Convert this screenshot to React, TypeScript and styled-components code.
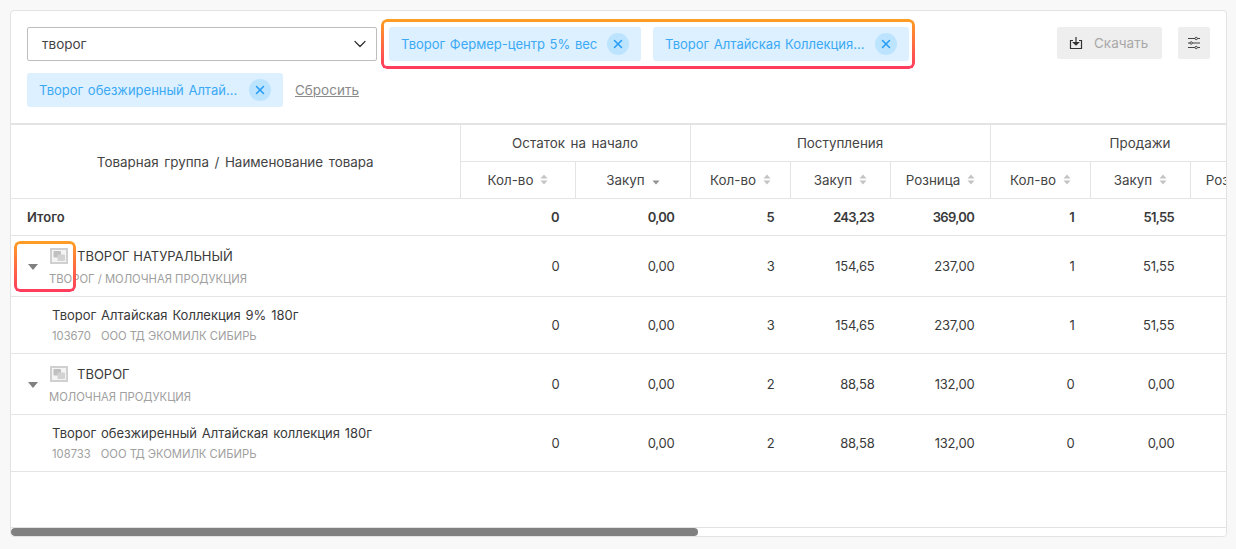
import React from "react";
import styled, { createGlobalStyle } from "styled-components";
import { ChevronDown, X } from "lucide-react";

const Global = createGlobalStyle`
  html, body { margin: 0; padding: 0; background: #f8f8f8; overflow: hidden; }
  body { font-family: "Inter", "Noto Sans", sans-serif; color: #3a3a3a; }
  * { box-sizing: border-box; }
`;

const Page = styled.div`
  padding: 10px 9px 0 10px;
  height: 549px;
`;
const Card = styled.div`
  position: relative;
  height: 527px;
  background: #fff;
  border: 1px solid #e2e2e2;
  border-radius: 4px;
  display: flex;
  flex-direction: column;
  overflow: hidden;
`;
const Toolbar = styled.div`
  height: 112px;
  padding: 16px 16px 0 16px;
  display: flex;
  justify-content: space-between;
  align-items: flex-start;
  flex: none;
`;
const Filters = styled.div`
  width: 1020px;
  display: flex;
  flex-wrap: wrap;
  gap: 12px;
  align-items: center;
`;
const Select = styled.div`
  width: 350px;
  height: 34px;
  border: 1px solid #bdbdbd;
  border-radius: 2px;
  display: flex;
  align-items: center;
  justify-content: space-between;
  padding: 0 6px 0 14px;
  font-size: 13.5px;
  color: #444;
`;
const Chip = styled.div<{ $w: number }>`
  width: ${(p) => p.$w}px;
  height: 34px;
  background: #dcf0ff;
  border-radius: 3px;
  display: flex;
  align-items: center;
  justify-content: space-between;
  padding: 0 12px 0 12px;
  color: #3ba9f5;
  font-size: 13px;
  word-spacing: 1px;
  white-space: nowrap;
`;
const ChipClose = styled.span`
  width: 22px;
  height: 22px;
  border-radius: 50%;
  background: #bde4ff;
  color: #2a9df4;
  display: flex;
  align-items: center;
  justify-content: center;
`;
const Reset = styled.a`
  font-size: 13.5px;
  color: #8a8a8a;
  text-decoration: underline;
`;
const Actions = styled.div`
  display: flex;
  gap: 16px;
`;
const DownloadButton = styled.div`
  width: 105px;
  height: 32px;
  background: #eeeeee;
  border-radius: 2px;
  display: flex;
  align-items: center;
  gap: 11px;
  padding-left: 12px;
  font-size: 13.5px;
  color: #a8a8a8;
`;
const IconButton = styled.div`
  width: 32px;
  height: 32px;
  background: #eeeeee;
  border-radius: 2px;
  display: flex;
  align-items: center;
  justify-content: center;
`;
const TableWrap = styled.div`
  flex: 1;
  overflow: hidden;
  border-top: 2px solid #e4e4e4;
`;
const Table = styled.table`
  width: 1279px;
  table-layout: fixed;
  border-collapse: collapse;
  font-size: 13px;
`;
const Th = styled.th<{ $h?: number; $pt?: number }>`
  font-weight: 400;
  font-size: 13.4px;
  word-spacing: 1.8px;
  height: ${(p) => p.$h ?? 37}px;
  padding: ${(p) => p.$pt ?? 0}px 0 0;
  text-align: center;
  color: #444;
  border-right: 1px solid #e4e4e4;
  border-bottom: 1px solid #e4e4e4;
  white-space: nowrap;
  overflow: hidden;
`;
const SortWrap = styled.span`
  display: inline-flex;
  align-items: center;
  gap: 7px;
  padding-left: 1px;
`;
const Row = styled.tr<{ $h: number }>`
  height: ${(p) => p.$h}px;
  border-bottom: 1px solid #e4e4e4;
`;
const Num = styled.td<{ $bold?: boolean }>`
  padding: 0 ${(p) => (p.$bold ? 16 : 15.5)}px 0 0;
  text-align: right;
  color: #3a3a3a;
  font-weight: ${(p) => (p.$bold ? 600 : 400)};
  letter-spacing: ${(p) => (p.$bold ? "-0.7px" : "-0.2px")};
`;
const TotalLabel = styled.td`
  padding-left: 16px;
  font-weight: 600;
`;
const GroupCell = styled.td`
  padding: 0 0 0 17px;
`;
const GroupInner = styled.div`
  display: flex;
  align-items: center;
  gap: 11px;
`;
const Caret = styled.span`
  width: 0;
  height: 0;
  border-left: 5.5px solid transparent;
  border-right: 5.5px solid transparent;
  border-top: 6px solid #808080;
  margin-top: 3px;
`;
const GroupText = styled.div`
  display: flex;
  flex-direction: column;
  gap: 8px;
  padding-top: 3px;
`;
const GroupTitle = styled.div`
  display: flex;
  align-items: center;
  height: 16px;
  gap: 9px;
  padding-left: 1px;
  font-size: 13px;
  color: #3a3a3a;
`;
const Sub = styled.div`
  font-size: 11.25px;
  line-height: 14px;
  color: #a0a0a0;
`;
const ItemCell = styled.td`
  padding-left: 41px;
`;
const ItemTitle = styled.div`
  font-size: 13px;
  word-spacing: 1.2px;
  color: #3a3a3a;
  margin-bottom: 6px;
`;
const SubCode = styled.span`
  margin-right: 10px;
`;
const Track = styled.div`
  flex: none;
  height: 9px;
  border-top: 1px solid #e2e2e2;
  background: #fff;
`;
const Thumb = styled.div`
  width: 687px;
  height: 8px;
  background: #808080;
  border-radius: 4px;
`;
const Highlight = styled.div<{ $x: number; $y: number; $w: number; $h: number }>`
  position: absolute;
  left: ${(p) => p.$x}px;
  top: ${(p) => p.$y}px;
  width: ${(p) => p.$w}px;
  height: ${(p) => p.$h}px;
  border-radius: 6px;
  padding: 3px;
  background: linear-gradient(180deg, #ff9f24 0%, #ff3a5e 100%);
  -webkit-mask: linear-gradient(#000 0 0) content-box, linear-gradient(#000 0 0);
  -webkit-mask-composite: xor;
  mask-composite: exclude;
  pointer-events: none;
`;

const Sort = ({ down }: { down?: boolean }) => (
  <svg width="8" height="11" viewBox="0 0 8 11">
    {!down && <path d="M4 0.5 L7.5 4.5 H0.5 Z" fill="#c4c4c4" />}
    <path d="M4 10.5 L7.5 6.5 H0.5 Z" fill={down ? "#909090" : "#c4c4c4"} />
  </svg>
);
const ImageIcon = () => (
  <svg width="18" height="16" viewBox="0 0 18 16">
    <rect x="1" y="1" width="16" height="14" fill="#f4f4f4" stroke="#d0d0d0" strokeWidth="2" />
    <rect x="3.5" y="3" width="7.5" height="6.5" rx="1" fill="#c0c0c0" />
    <rect x="7.5" y="6.5" width="7.5" height="6.5" rx="1" fill="#d2d2d2" />
  </svg>
);
const DownloadIcon = () => (
  <svg width="14" height="14" viewBox="0 0 14 14" fill="none" stroke="#333" strokeWidth="1.2">
    <path d="M4 4.5 H1.5 V12.5 H12.5 V4.5 H10" />
    <path d="M7 1 V8.5" />
    <path d="M4.5 6.5 L7 9 L9.5 6.5 Z" fill="#333" />
  </svg>
);
const SlidersIcon = () => (
  <svg width="14" height="14" viewBox="0 0 14 14" fill="none" stroke="#444" strokeWidth="1">
    <path d="M1 2.5 H8 M10.5 2.5 H13 M1 7 H3 M5.5 7 H13 M1 11.5 H8 M10.5 11.5 H13" />
    <circle cx="9.2" cy="2.5" r="1.2" />
    <circle cx="4.2" cy="7" r="1.2" />
    <circle cx="9.2" cy="11.5" r="1.2" />
  </svg>
);

const widths = [449, 115, 115, 100, 100, 100, 100, 100, 100];
const Nums = ({ v, bold }: { v: string[]; bold?: boolean }) => (
  <>
    {v.map((x, i) => (
      <Num key={i} $bold={bold}>{x}</Num>
    ))}
    <Num />
  </>
);
const H = ({ t, down }: { t: string; down?: boolean }) => (
  <Th>
    <SortWrap>
      {t}
      <Sort down={down} />
    </SortWrap>
  </Th>
);

const Group = ({ title, sub, v }: { title: string; sub: string; v: string[] }) => (
  <Row $h={61}>
    <GroupCell>
      <GroupInner>
        <Caret />
        <GroupText>
          <GroupTitle>
            <ImageIcon />
            {title}
          </GroupTitle>
          <Sub>{sub}</Sub>
        </GroupText>
      </GroupInner>
    </GroupCell>
    <Nums v={v} />
  </Row>
);
const Item = ({ title, code, v }: { title: string; code: string; v: string[] }) => (
  <Row $h={57}>
    <ItemCell>
      <ItemTitle>{title}</ItemTitle>
      <Sub>
        <SubCode>{code}</SubCode>ООО ТД ЭКОМИЛК СИБИРЬ
      </Sub>
    </ItemCell>
    <Nums v={v} />
  </Row>
);

const Close = () => (
  <ChipClose><X size={14} strokeWidth={2.6} /></ChipClose>
);

export default function App() {
  return (
    <Page>
      <Global />
      <Card>
        <Toolbar>
          <Filters>
            <Select>
              творог
              <ChevronDown size={20} strokeWidth={1.5} color="#333" />
            </Select>
            <Chip $w={252}>
              Творог Фермер-центр 5% вес
              <Close />
            </Chip>
            <Chip $w={256}>
              Творог Алтайская Коллекция...
              <Close />
            </Chip>
            <Chip $w={256}>
              Творог обезжиренный Алтай...
              <Close />
            </Chip>
            <Reset>Сбросить</Reset>
          </Filters>
          <Actions>
            <DownloadButton>
              <DownloadIcon />
              Скачать
            </DownloadButton>
            <IconButton><SlidersIcon /></IconButton>
          </Actions>
        </Toolbar>
        <TableWrap>
          <Table>
            <colgroup>
              {widths.map((w, i) => <col key={i} style={{ width: w }} />)}
            </colgroup>
            <thead>
              <tr>
                <Th rowSpan={2} $pt={2}>Товарная группа / Наименование товара</Th>
                <Th colSpan={2} $h={36}>Остаток на начало</Th>
                <Th colSpan={3} $h={36}>Поступления</Th>
                <Th colSpan={3} $h={36}>Продажи</Th>
              </tr>
              <tr>
                <H t="Кол-во" />
                <H t="Закуп" down />
                <H t="Кол-во" />
                <H t="Закуп" />
                <H t="Розница" />
                <H t="Кол-во" />
                <H t="Закуп" />
                <H t="Розница" />
              </tr>
            </thead>
            <tbody>
              <Row $h={37}>
                <TotalLabel>Итого</TotalLabel>
                <Nums bold v={["0", "0,00", "5", "243,23", "369,00", "1", "51,55"]} />
              </Row>
              <Group title="ТВОРОГ НАТУРАЛЬНЫЙ" sub="ТВОРОГ / МОЛОЧНАЯ ПРОДУКЦИЯ" v={["0", "0,00", "3", "154,65", "237,00", "1", "51,55"]} />
              <Item title="Творог Алтайская Коллекция 9% 180г" code="103670" v={["0", "0,00", "3", "154,65", "237,00", "1", "51,55"]} />
              <Group title="ТВОРОГ" sub="МОЛОЧНАЯ ПРОДУКЦИЯ" v={["0", "0,00", "2", "88,58", "132,00", "0", "0,00"]} />
              <Item title="Творог обезжиренный Алтайская коллекция 180г" code="108733" v={["0", "0,00", "2", "88,58", "132,00", "0", "0,00"]} />
            </tbody>
          </Table>
        </TableWrap>
        <Track><Thumb /></Track>
        <Highlight $x={370} $y={8} $w={534} $h={50} />
        <Highlight $x={3} $y={230} $w={62} $h={51} />
      </Card>
    </Page>
  );
}
